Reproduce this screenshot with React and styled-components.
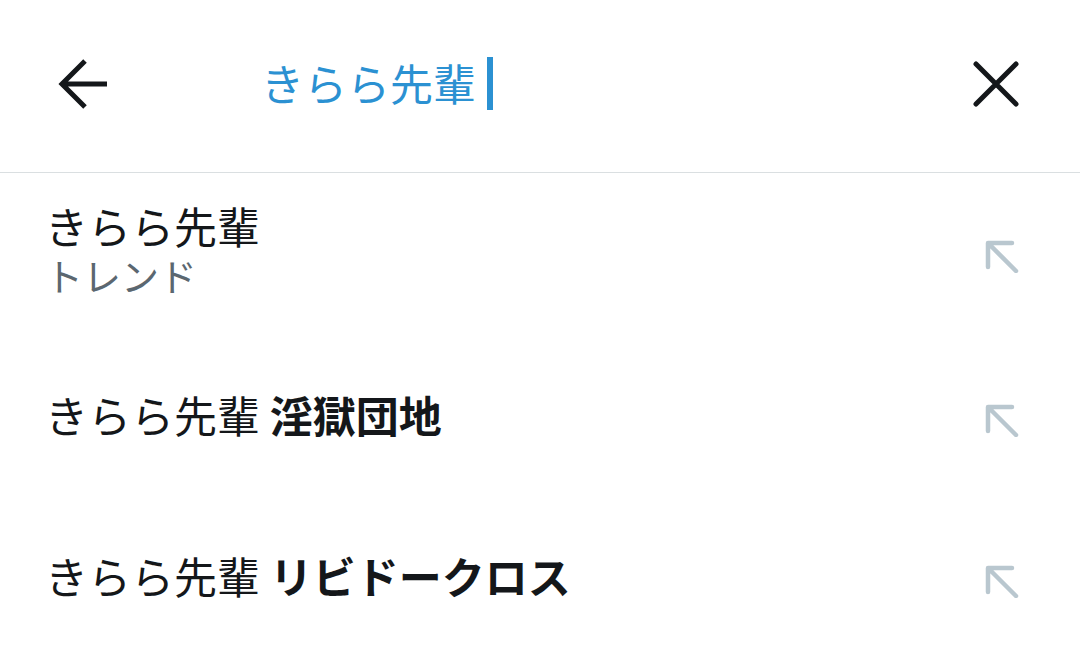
import React from 'react';
import styled, { createGlobalStyle } from 'styled-components';

const GlobalStyle = createGlobalStyle`
  html, body {
    margin: 0;
    padding: 0;
    background: #ffffff;
  }
  body {
    font-family: Roboto, "Noto Sans CJK JP", "Noto Sans", sans-serif;
    color: #14171a;
  }
`;

const Page = styled.div`
  width: 1080px;
  height: 669px;
  overflow: hidden;
  background: #fff;
`;

const Header = styled.div`
  height: 173px;
  border-bottom: 1px solid #dadfe1;
  display: flex;
  align-items: center;
  padding: 0 58px 0 58px;
  box-sizing: border-box;
`;

const IconButton = styled.div`
  width: 52px;
  height: 52px;
  display: flex;
  align-items: center;
  justify-content: center;
  flex-shrink: 0;
  margin-top: -5px;
`;

const SearchField = styled.div`
  flex: 1;
  display: flex;
  align-items: center;
  padding-left: 151px;
  margin-top: -6px;
`;

const Query = styled.span`
  font-family: "Noto Sans CJK JP", sans-serif;
  font-size: 43px;
  line-height: 52px;
  color: #2b91d2;
  margin-top: -2px;
`;

const Caret = styled.span`
  display: inline-block;
  width: 6px;
  height: 53px;
  background: #2b91d2;
  margin-left: 11px;
`;

const List = styled.div`
  display: flex;
  flex-direction: column;
`;

const Row = styled.div`
  height: ${p => p.$h}px;
  display: flex;
  align-items: center;
  padding: 0 60px 0 45px;
  box-sizing: border-box;
`;

const RowText = styled.div`
  flex: 1;
  display: flex;
  flex-direction: column;
  padding-bottom: 10px;
`;

const Title = styled.div`
  font-family: "Noto Sans CJK JP", sans-serif;
  font-size: 43px;
  line-height: 50px;
  color: #14171a;
  white-space: nowrap;
  b {
    font-weight: 700;
  }
`;

const Sub = styled.div`
  font-family: "Noto Sans CJK JP", sans-serif;
  font-size: 38px;
  line-height: 50px;
  color: #5b6770;
`;

const BackIcon = () => (
  <svg width="52" height="52" viewBox="0 0 52 52">
    <path d="M49 26 H6 M27 3 L4 26 L27 49" fill="none" stroke="#14171a" strokeWidth="5" strokeLinejoin="miter" />
  </svg>
);

const CloseIcon = () => (
  <svg width="52" height="52" viewBox="0 0 52 52">
    <path d="M6 6 L46 46 M46 6 L6 46" fill="none" stroke="#14171a" strokeWidth="5" strokeLinecap="round" />
  </svg>
);

const FillIcon = () => (
  <svg width="36" height="36" viewBox="0 0 36 36">
    <path d="M4 30 V6 H28 M5 7 L32 34" fill="none" stroke="#b9c7cf" strokeWidth="4.5" strokeLinecap="round" strokeLinejoin="round" />
  </svg>
);

const rows = [
  { h: 163, bold: null, sub: 'トレンド' },
  { h: 165, bold: '淫獄団地' },
  { h: 157, bold: 'リビドークロス' },
];

export default function App() {
  return (
    <Page>
      <GlobalStyle />
      <Header>
        <IconButton><BackIcon /></IconButton>
        <SearchField>
          <Query>きらら先輩</Query>
          <Caret />
        </SearchField>
        <IconButton><CloseIcon /></IconButton>
      </Header>
      <List>
        {rows.map((r, i) => (
          <Row key={i} $h={r.h}>
            <RowText>
              <Title>
                きらら先輩{r.bold && <> <b>{r.bold}</b></>}
              </Title>
              {r.sub && <Sub>{r.sub}</Sub>}
            </RowText>
            <FillIcon />
          </Row>
        ))}
      </List>
    </Page>
  );
}
